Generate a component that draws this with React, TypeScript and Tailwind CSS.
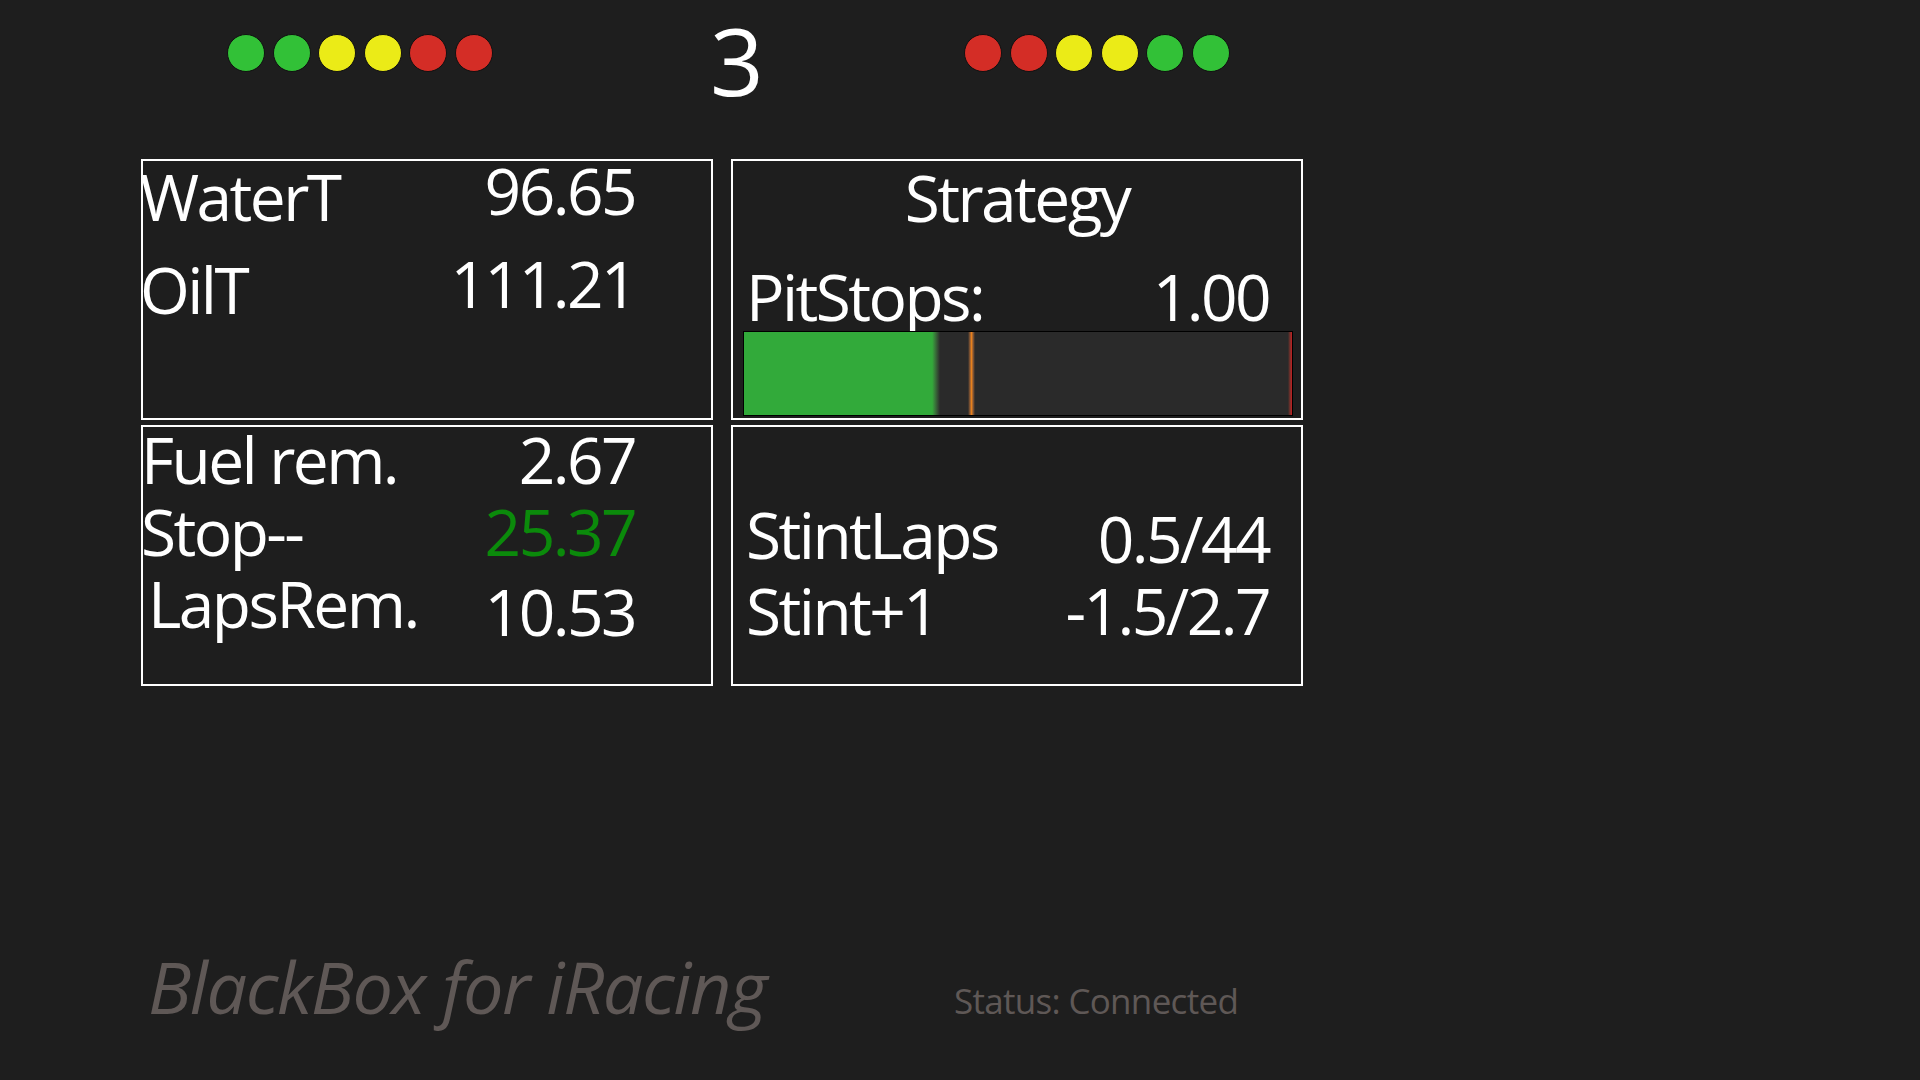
import React from "react";

const font = { fontFamily: '"Open Sans", "Noto Sans", sans-serif' };

function Light({ color }: { color: string }) {
  return <div className={`h-[38px] w-[38px] rounded-full border border-[#111111] ${color}`} />;
}

const GREEN = "bg-[#32c137]";
const YELLOW = "bg-[#ebeb17]";
const RED = "bg-[#d42d26]";

function Box({ children, className = "" }: { children: React.ReactNode; className?: string }) {
  return (
    <div className={`h-[261px] w-[572px] border-2 border-white bg-[#1e1e1e] ${className}`}>{children}</div>
  );
}

export default function App() {
  return (
    <div
      className="flex h-[1080px] w-[1920px] flex-col overflow-hidden bg-[#1e1e1e] text-white"
      style={font}
    >
      {/* shift lights + gear */}
      <div className="flex h-[159px] items-start">
        <div className="ml-[227px] mt-[34px] flex gap-[7.6px]">
          <Light color={GREEN} />
          <Light color={GREEN} />
          <Light color={YELLOW} />
          <Light color={YELLOW} />
          <Light color={RED} />
          <Light color={RED} />
        </div>
        <div className="ml-[194px] w-[100px] text-center text-[94px] leading-[120px]">3</div>
        <div className="ml-[177px] mt-[34px] flex gap-[7.6px]">
          <Light color={RED} />
          <Light color={RED} />
          <Light color={YELLOW} />
          <Light color={YELLOW} />
          <Light color={GREEN} />
          <Light color={GREEN} />
        </div>
      </div>

      <div className="ml-[141px] grid w-[1162px] grid-cols-[572px_572px] gap-x-[18px] gap-y-[5px] text-[64px] leading-[66px] tracking-[-0.04em]">
        {/* temps */}
        <Box className="flex">
          <div className="-ml-[3px] flex w-[343px] flex-col gap-[27px] pt-[3px]">
            <div className="h-[66px]">WaterT</div>
            <div className="h-[66px]">OilT</div>
          </div>
          <div className="-mt-[3px] flex w-[152px] flex-col items-end gap-[27px]">
            <div className="h-[66px]">96.65</div>
            <div className="h-[66px]">111.21</div>
          </div>
        </Box>

        {/* strategy */}
        <Box className="flex flex-col">
          <div className="mt-[4px] h-[66px] text-center">Strategy</div>
          <div className="mt-[33px] flex h-[66px] justify-between pl-[13px] pr-[32px]">
            <span>PitStops:</span>
            <span>1.00</span>
          </div>
          <div className="relative ml-[10px] mr-[8px] mt-[1px] h-[85px] border border-black bg-[#2a2a2a]">
            <div className="h-full w-[196px] bg-gradient-to-r from-[#32aa3a] from-[96%] to-[#2a2a2a]" />
            <div className="absolute left-[224px] top-0 h-full w-[7px] bg-gradient-to-r from-[#2a2a2a] via-[#e7811c] to-[#2a2a2a]" />
            <div className="absolute right-0 top-0 h-full w-[4px] bg-gradient-to-r from-[#2a2a2a] to-[#c8141e]" />
          </div>
        </Box>

        {/* fuel */}
        <Box className="flex">
          <div className="-ml-[2px] flex w-[342px] flex-col gap-[6px]">
            <div className="h-[66px]">Fuel rem.</div>
            <div className="h-[66px]">Stop--</div>
            <div className="ml-[7px] h-[66px]">LapsRem.</div>
          </div>
          <div className="flex w-[152px] flex-col items-end">
            <div className="h-[66px]">2.67</div>
            <div className="mt-[6px] h-[66px] text-[#0b8a0b]">25.37</div>
            <div className="mt-[14px] h-[66px]">10.53</div>
          </div>
        </Box>

        {/* stints */}
        <Box className="flex flex-col pl-[13px] pr-[32px] pt-[75px]">
          <div className="flex h-[66px] justify-between">
            <span>StintLaps</span>
            <span className="mt-[4px]">0.5/44</span>
          </div>
          <div className="mt-[10px] flex h-[66px] justify-between">
            <span>Stint+1</span>
            <span>-1.5/2.7</span>
          </div>
        </Box>
      </div>

      <div className="ml-[148px] mt-[264px] flex items-baseline">
        <div className="text-[72px] italic leading-[72px] tracking-[-0.02em] text-[#5f5856]">
          BlackBox for iRacing
        </div>
        <div className="ml-[188px] text-[35px] tracking-[-0.02em] text-[#5f5856]">Status: Connected</div>
      </div>
    </div>
  );
}
